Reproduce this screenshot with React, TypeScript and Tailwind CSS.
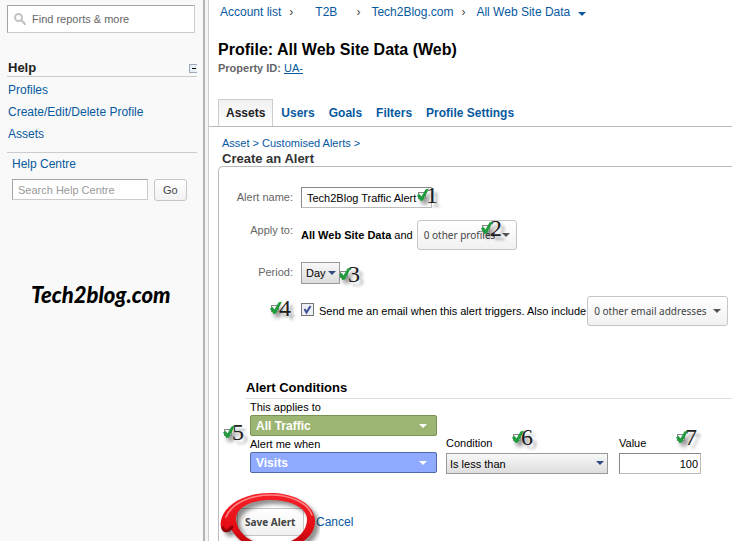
import type { ReactNode } from "react";
import clsx from "clsx";

const TABS = ["Users", "Goals", "Filters", "Profile Settings"];

function Caret({ className }: { className?: string }) {
  return (
    <svg viewBox="0 0 8 4" className={clsx("w-2 h-1 shrink-0", className)} aria-hidden="true">
      <path d="M0 0h8L4 4z" fill="currentColor" />
    </svg>
  );
}

/* Numbered tick laid over the form */
function Step({ n, className }: { n: number; className: string }) {
  return (
    <span className={clsx("absolute z-10 flex items-center pointer-events-none", className)}>
      <svg viewBox="0 0 13 14" className="w-[13px] h-3.5 drop-shadow-[3px_4px_2px_rgba(0,0,0,0.4)]" aria-hidden="true">
        <rect x="1.5" y="4.5" width="7" height="6" fill="#f4f4f4" stroke="#888" />
        <path d="M0 7.5l2.5-1.5 2 2.5L8.5 1.5 12 .5 6 12.5 3.5 13z" fill="#1f9a3c" />
      </svg>
      <span className="-ml-1 font-['Liberation_Serif',serif] text-2xl leading-6 text-[#222] [text-shadow:4px_4px_3px_rgba(0,0,0,0.3)]">
        {n}
      </span>
    </span>
  );
}

function GreyButton({ id, children, className }: { id?: string; children: ReactNode; className?: string }) {
  return (
    <button
      id={id}
      type="button"
      className={clsx(
        "flex items-center justify-between rounded-[3px] border border-[#c6c6c6] bg-linear-to-b from-white to-[#f1f1f1] whitespace-nowrap text-[#444]",
        className
      )}
    >
      {children}
    </button>
  );
}

function Sidebar() {
  return (
    <aside className="w-[205px] shrink-0 border-r-2 border-[#b3b3b3] bg-[#f9f9f9] pt-[5px] pl-[7px] pr-1.5">
      <label className="flex h-7 items-center gap-1.5 border border-t-[#a5a5a5] border-l-[#a5a5a5] border-r-[#ccc] border-b-[#ccc] bg-white pl-1.5 mr-0.5">
        <svg viewBox="0 0 12 12" className="w-3 h-3 shrink-0" fill="none" stroke="#c4c4c4" aria-hidden="true">
          <circle cx="4.5" cy="4.5" r="3.5" strokeWidth="2" />
          <path d="M7.5 7.5L11 11" strokeWidth="2.4" strokeLinecap="round" />
        </svg>
        <input
          aria-label="Find reports"
          placeholder="Find reports & more"
          className="w-full min-w-0 text-[11px] outline-none placeholder:text-[#666]"
        />
      </label>

      <div className="mt-[27px] flex h-[17px] items-center justify-between border-b border-[#ccc] pl-px">
        <h2 className="text-[13px] font-bold text-[#222]">Help</h2>
        <button type="button" aria-label="Collapse help" className="flex h-[9px] w-2 items-center justify-center border border-r-0 border-[#9aaabb] bg-[#e8eef4]">
          <span className="h-px w-1 bg-black" />
        </button>
      </div>
      <nav className="flex flex-col border-b border-[#ccc] pt-0.5 pb-[7px] pl-px text-xs leading-[22px] text-[#0759a0]">
        <a href="#profiles">Profiles</a>
        <a href="#edit">Create/Edit/Delete Profile</a>
        <a href="#assets">Assets</a>
      </nav>

      <div className="pl-[5px]">
        <a href="#help" className="block text-xs leading-[22px] text-[#0759a0]">
          Help Centre
        </a>
        <div className="mt-1 flex gap-1.5">
          <input
            aria-label="Search Help Centre"
            placeholder="Search Help Centre"
            className="h-[21px] w-[136px] border border-t-[#a5a5a5] border-l-[#a5a5a5] border-r-[#ccc] border-b-[#ccc] bg-white px-[5px] text-[11px] outline-none placeholder:text-[#999]"
          />
          <GreyButton className="h-[22px] px-2 text-[11px]">Go</GreyButton>
        </div>
      </div>

      <p className="mt-20 pl-6 font-[Lato,sans-serif] text-[22px] leading-7 font-black italic text-black">Tech2blog.com</p>
    </aside>
  );
}

function Breadcrumb() {
  return (
    <nav className="flex h-6 items-center pl-[11px] text-xs whitespace-nowrap text-[#0759a0]">
      <a href="#accounts">Account list</a>
      <span className="w-[34px] pl-2 text-[#444]">›</span>
      <a href="#t2b">T2B</a>
      <span className="w-[34px] pl-[19px] text-[#444]">›</span>
      <a href="#site">Tech2Blog.com</a>
      <span className="w-[23px] pl-2 text-[#444]">›</span>
      <a href="#data">All Web Site Data</a>
      <Caret className="ml-2 mt-1" />
    </nav>
  );
}

function Row({ label, htmlFor, children }: { label: string; htmlFor: string; children: ReactNode }) {
  return (
    <div className="flex gap-2">
      <label htmlFor={htmlFor} className="w-[74px] shrink-0 text-right text-[11px] leading-5 text-[#666]">
        {label}
      </label>
      {children}
    </div>
  );
}

function ColorSelect({ id, value, className }: { id: string; value: string; className: string }) {
  return (
    <div className="relative w-[187px] text-white">
      <select
        id={id}
        className={clsx("block h-[21px] w-full appearance-none rounded-xs border pl-[5px] text-xs font-bold outline-none", className)}
      >
        <option>{value}</option>
      </select>
      <Caret className="absolute right-2.5 top-[9px] pointer-events-none" />
    </div>
  );
}

/* Brush-drawn ring round the save button */
function SaveRing() {
  return (
    <svg viewBox="0 0 104 60" className="absolute -left-[21px] -top-[18px] z-10 w-[104px] h-[60px] pointer-events-none" aria-hidden="true">
      <defs>
        <linearGradient id="ring" x1="0" y1="0" x2="0" y2="1">
          <stop offset="0" stopColor="#f5222a" />
          <stop offset="0.6" stopColor="#e60d14" />
          <stop offset="1" stopColor="#b00008" />
        </linearGradient>
      </defs>
      <g className="drop-shadow-[4px_4px_2px_rgba(0,0,0,0.45)]">
        <path
          fillRule="evenodd"
          d="M7 41C4 38 4 32 6 27 11 14 28 3 54 3c26 0 45 12 45 28 0 18-20 29-45 29-17 0-31-7-39-21-2 3-5 4-8 2zM20 30c2 15 17 25 36 25 20 0 35-11 35-26C91 18 75 10 55 10 35 10 19 18 20 30z"
          fill="url(#ring)"
        />
        <path d="M10 27C16 13 34 5 55 5c20 0 37 8 41 20" fill="none" stroke="#ff8585" strokeWidth="1.6" strokeLinecap="round" />
        <path d="M7 38c1 4 5 4 9-1" fill="none" stroke="#8f0008" strokeWidth="3" strokeLinecap="round" />
      </g>
    </svg>
  );
}

function AlertForm() {
  return (
    <form className="relative ml-[9px] flex-1 rounded-tl-[5px] border-t border-l border-[#bbb] pt-5">
      <div className="flex flex-col gap-3">
        <Row label="Alert name:" htmlFor="name">
          <div className="relative">
            <input
              id="name"
              defaultValue="Tech2Blog Traffic Alert"
              className="block h-[21px] w-[131px] border border-t-[#888] border-l-[#888] border-r-[#bbb] border-b-[#bbb] px-[5px] text-[11px] text-black outline-none"
            />
            <Step n={1} className="left-[116px] -top-1" />
          </div>
        </Row>
        <Row label="Apply to:" htmlFor="profiles">
          <div className="relative flex items-center gap-1 whitespace-nowrap text-[11px] text-black">
            <span>
              <b>All Web Site Data</b> and
            </span>
            <GreyButton id="profiles" className="h-[30px] w-[100px] px-1.5 font-['Noto_Sans',sans-serif] text-[10px]">
              0 other profiles <Caret className="text-[#555]" />
            </GreyButton>
            <Step n={2} className="left-[180px] -top-1" />
          </div>
        </Row>
        <Row label="Period:" htmlFor="period">
          <div className="relative">
            <select
              id="period"
              className="block h-[22px] w-[39px] appearance-none border border-[#999] bg-linear-to-b from-[#f8f8f8] to-[#ddd] pl-1 text-[11px] text-black outline-none"
            >
              <option>Day</option>
            </select>
            <Caret className="absolute right-1 top-[9px] text-[#2f4a80] pointer-events-none" />
            <Step n={3} className="left-[38px] top-0" />
          </div>
        </Row>
        <div className="relative flex items-center pl-[82px] whitespace-nowrap text-[11px] text-black">
          <Step n={4} className="left-[51px] top-0" />
          <label className="flex items-center gap-[5px]">
            <span className="relative mb-1 flex">
              <input type="checkbox" defaultChecked className="h-[13px] w-[13px] appearance-none border border-[#777] bg-[#eef0f6]" />
              <svg viewBox="0 0 13 13" className="absolute inset-0 pointer-events-none" aria-hidden="true">
                <path d="M3.5 6l2 3.5L9.5 3" fill="none" stroke="#3b4f96" strokeWidth="2" />
              </svg>
            </span>
            Send me an email when this alert triggers. Also include
          </label>
          <GreyButton className="ml-px h-[30px] w-[141px] px-1.5 font-['Noto_Sans',sans-serif] text-[10px]">
            0 other email addresses <Caret className="text-[#555]" />
          </GreyButton>
        </div>
      </div>

      <h3 className="mt-[52px] ml-[27px] border-b border-[#ddd] text-[13px] leading-5 font-bold text-black">Alert Conditions</h3>
      <div className="relative flex pl-[31px] text-[11px] leading-4 text-black">
        <Step n={5} className="left-1 top-[21px]" />
        <Step n={6} className="left-[293px] top-[26px]" />
        <Step n={7} className="left-[457px] top-[26px]" />
        <div>
          <label htmlFor="segment" className="block">
            This applies to
          </label>
          <ColorSelect id="segment" value="All Traffic" className="border-[#7c9453] bg-[#9db573]" />
          <label htmlFor="metric" className="block">
            Alert me when
          </label>
          <ColorSelect id="metric" value="Visits" className="border-[#5269a8] bg-[#8faaff]" />
        </div>
        <div className="ml-[9px] flex flex-col gap-0.5 pt-9">
          <label htmlFor="condition">Condition</label>
          <div className="relative">
            <select
              id="condition"
              className="block h-[21px] w-[162px] appearance-none border border-[#999] bg-linear-to-b from-[#f8f8f8] to-[#ddd] pl-[3px] text-[11px] text-black outline-none"
            >
              <option>Is less than</option>
            </select>
            <Caret className="absolute right-1 top-2 text-[#2f4a80] pointer-events-none" />
          </div>
        </div>
        <div className="ml-[11px] flex flex-col gap-0.5 pt-9">
          <label htmlFor="value">Value</label>
          <input
            id="value"
            defaultValue="100"
            className="h-[21px] w-[82px] border border-t-[#888] border-l-[#888] border-r-[#bbb] border-b-[#bbb] px-0.5 text-right text-[11px] outline-none"
          />
        </div>
      </div>

      {/* the ring hangs past the row, so it is clipped at the page edge */}
      <div className="-mb-5 flex items-center gap-3 overflow-hidden pt-[34px] pb-[5px] pl-[18px]">
        <div className="relative">
          <GreyButton className="h-7 w-[67px] px-[7px] font-['Noto_Sans',sans-serif] text-[10px] font-bold">Save Alert</GreyButton>
          <SaveRing />
        </div>
        <a href="#cancel" className="text-xs text-[#0759a0]">
          Cancel
        </a>
      </div>
    </form>
  );
}

export default function App() {
  return (
    <div className="flex min-h-screen overflow-hidden bg-[#f4f4f4] font-['Liberation_Sans',Arial,sans-serif]">
      <Sidebar />
      <main className="ml-[3px] flex min-w-0 flex-1 flex-col border-l border-[#ccc] bg-white">
        <Breadcrumb />
        <h1 className="mt-3.5 pl-[9px] text-base leading-6 font-bold text-black">Profile: All Web Site Data (Web)</h1>
        <p className="pl-[9px] text-[11px] leading-3 font-bold text-[#666]">
          Property ID:{" "}
          <a href="#property" className="font-normal text-[#0759a0] underline">
            UA-
          </a>
        </p>

        <nav className="mt-[25px] flex border-b border-[#bbb] pl-[9px] text-xs font-bold">
          <a
            href="#tab-assets"
            className="border border-b-0 border-[#ccc] bg-linear-to-b from-[#f1f1f1] to-white px-[7px] leading-[26px] text-[#222]"
          >
            Assets
          </a>
          <div className="flex gap-3.5 pt-px pl-2 leading-[26px] text-[#0759a0]">
            {TABS.map((tab) => (
              <a key={tab} href="#tab">
                {tab}
              </a>
            ))}
          </div>
        </nav>

        <nav className="mt-2 pl-[13px] text-[11px] leading-4 text-[#0759a0]">
          <a href="#asset">Asset</a> &gt; <a href="#alerts">Customised Alerts</a> &gt;
        </nav>
        <h2 className="pl-[13px] text-[13px] leading-[15px] font-bold text-[#333]">Create an Alert</h2>
        <AlertForm />
      </main>
    </div>
  );
}
